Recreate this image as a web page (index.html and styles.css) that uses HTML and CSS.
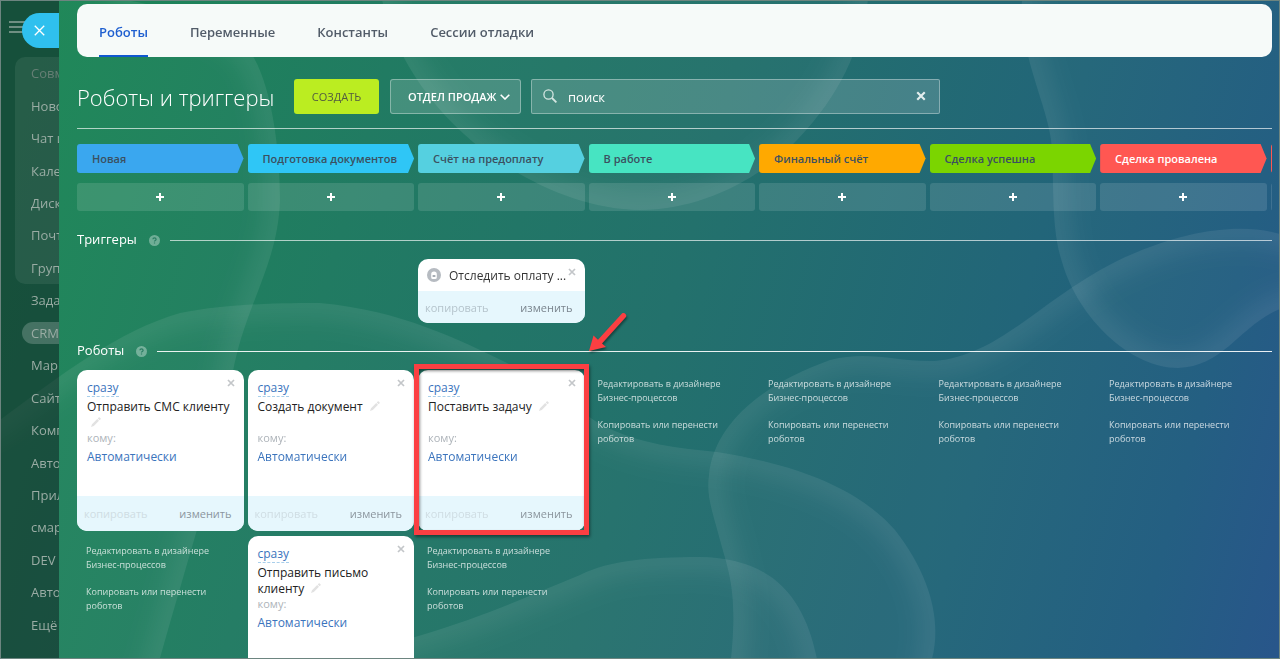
FILE: index.html
```html
<!DOCTYPE html>
<html lang="ru">
<head>
<meta charset="utf-8">
<title>Роботы и триггеры</title>
<link rel="stylesheet" href="styles.css">
</head>
<body>
<svg class="backdrop" viewBox="0 0 1280 659" preserveAspectRatio="none" aria-hidden="true">
  <defs>
    <linearGradient id="base" gradientUnits="userSpaceOnUse" x1="0" y1="200" x2="1300" y2="560">
      <stop offset="0" stop-color="#1c8656"/>
      <stop offset="0.25" stop-color="#217b62"/>
      <stop offset="0.5" stop-color="#23716c"/>
      <stop offset="0.75" stop-color="#226579"/>
      <stop offset="0.9" stop-color="#205c80"/>
      <stop offset="1" stop-color="#245388"/>
    </linearGradient>
    <filter id="soft" x="-20%" y="-20%" width="140%" height="140%"><feGaussianBlur stdDeviation="12"/></filter>
    <path id="w1" d="M-200 -200H100L125 0C190 10 240 35 254 58C272 90 280 150 280 200C278 270 240 310 230 390C220 480 150 659 100 900H-200Z"/>
    <path id="w2" d="M370 -200L382 0C395 60 440 120 490 155C540 190 590 209 640 210C700 210 760 180 798 139C840 95 860 50 868 0V-200Z"/>
    <path id="w3" d="M1022 -200V0C1018 50 1047 105 1051 140C1055 180 1050 225 1062 262C1078 318 1130 368 1178 368C1225 366 1240 325 1280 309L1480 250V-200Z"/>
    <path id="w4" d="M720 900L731 659C738 590 728 570 720 540C712 510 706 495 709 475C714 425 760 385 830 360C870 350 895 362 935 361C1000 355 1040 300 1115 262C1180 230 1240 222 1280 234L1480 280V900Z"/>
    <path id="w5" d="M-200 520L0 420C60 375 120 330 180 313C230 303 290 303 320 303C400 310 460 340 505 362C545 382 570 405 600 424C640 445 680 448 717 452C800 465 860 490 895 530C930 575 942 620 932 659L900 900H-200Z"/>
    <path id="w6" d="M200 690L415 637C490 615 530 595 580 575C610 560 650 557 700 557C775 558 805 600 817 659V900H200Z"/>
    <clipPath id="c1"><use href="#w1"/></clipPath>
    <clipPath id="c2"><use href="#w2"/></clipPath>
    <clipPath id="c3"><use href="#w3"/></clipPath>
    <clipPath id="c4"><use href="#w4"/></clipPath>
    <clipPath id="c5"><use href="#w5"/></clipPath>
    <clipPath id="c6"><use href="#w6"/></clipPath>
  </defs>
  <rect width="1280" height="659" fill="url(#base)"/>
  <g fill="#fff" fill-opacity="0.02">
    <use href="#w1"/><use href="#w2"/><use href="#w3"/><use href="#w4"/><use href="#w5"/><use href="#w6"/>
  </g>
  <g fill="none" stroke="#fff" stroke-width="28" stroke-opacity="0.08">
    <g clip-path="url(#c1)"><use href="#w1" filter="url(#soft)"/></g>
    <g clip-path="url(#c2)"><use href="#w2" filter="url(#soft)"/></g>
    <g clip-path="url(#c3)"><use href="#w3" filter="url(#soft)"/></g>
    <g clip-path="url(#c4)"><use href="#w4" filter="url(#soft)"/></g>
    <g clip-path="url(#c5)"><use href="#w5" filter="url(#soft)"/></g>
    <g clip-path="url(#c6)"><use href="#w6" filter="url(#soft)"/></g>
  </g>
</svg>
<svg class="sprite" aria-hidden="true">
  <symbol id="i-close" viewBox="0 0 8 8"><path d="M1 1l6 6M7 1L1 7" stroke="currentColor" stroke-width="1.7" fill="none"/></symbol>
  <symbol id="i-plus" viewBox="0 0 8 8"><path d="M4 0v8M0 4h8" stroke="currentColor" stroke-width="2" fill="none"/></symbol>
  <symbol id="i-pencil" viewBox="0 0 10 10"><path d="M0 10L1 7.2 6.2 2 8 3.8 2.8 9ZM6.8 1.4L7.9.3Q8.3 0 8.7.4L9.7 1.4Q10 1.8 9.6 2.2L8.6 3.2Z" fill="currentColor"/></symbol>
  <symbol id="i-help" viewBox="0 0 11 11"><circle cx="5.5" cy="5.5" r="5.5" fill="#fff" fill-opacity="0.35"/><path d="M3.9 4.3Q4 2.9 5.5 2.9T7.1 4.2Q7.1 5 6.2 5.5 5.5 5.9 5.5 6.6M5.5 7.4v1.2" stroke="#2a7b62" stroke-width="1.2" fill="none"/></symbol>
</svg>

<div class="app">
  <aside class="side">
    <button class="burger" type="button" aria-label="Меню"><span></span><span></span><span></span></button>
    <button class="slider-close" type="button" aria-label="Закрыть"><svg viewBox="0 0 10 10"><path d="M.7.7l8.6 8.6M9.3.7L.7 9.3" stroke="#fff" stroke-width="1.2"/></svg></button>
    <nav class="menu">
      <ul class="menu-group">
        <li><a class="faded" href="#">Совм</a></li>
        <li><a href="#">Ново</a></li>
        <li><a href="#">Чат и</a></li>
        <li><a href="#">Кале</a></li>
        <li><a href="#">Диск</a></li>
        <li><a href="#">Почт</a></li>
        <li><a href="#">Груп</a></li>
      </ul>
      <ul class="menu-rest">
        <li><a href="#">Зада</a></li>
        <li class="current"><a href="#">CRM</a></li>
        <li><a href="#">Мар</a></li>
        <li><a href="#">Сайт</a></li>
        <li><a href="#">Комп</a></li>
        <li><a href="#">Авто</a></li>
        <li><a href="#">Прил</a></li>
        <li><a href="#">смар</a></li>
        <li><a href="#">DEV</a></li>
        <li><a href="#">Авто</a></li>
        <li><a href="#">Ещё</a></li>
      </ul>
    </nav>
  </aside>

  <main class="panel">
    <nav class="tabs">
      <a class="active" href="#">Роботы</a>
      <a href="#">Переменные</a>
      <a href="#">Константы</a>
      <a href="#">Сессии отладки</a>
    </nav>

    <header class="toolbar">
      <h1>Роботы и триггеры</h1>
      <button class="create" type="button">СОЗДАТЬ</button>
      <div class="pick">
        <select aria-label="Воронка"><option>ОТДЕЛ ПРОДАЖ</option></select>
        <svg viewBox="0 0 10 6"><path d="M.7.7L5 5 9.3.7" fill="none" stroke="#fff" stroke-width="1.6"/></svg>
      </div>
      <div class="search">
        <svg class="lens" viewBox="0 0 14 14"><circle cx="5.5" cy="5.5" r="4.6" fill="none" stroke="#d5e6e2" stroke-width="1.3"/><path d="M9 9l4.4 4.4" stroke="#d5e6e2" stroke-width="1.8"/></svg>
        <input type="text" aria-label="Поиск" value="поиск">
        <button type="button" aria-label="Очистить"><svg><use href="#i-close"/></svg></button>
      </div>
    </header>

    <div class="board stages">
      <div class="stage blue">Новая</div>
      <div class="stage sky">Подготовка документов</div>
      <div class="stage aqua">Счёт на предоплату</div>
      <div class="stage mint">В работе</div>
      <div class="stage orange">Финальный счёт</div>
      <div class="stage green">Сделка успешна</div>
      <div class="stage red">Сделка провалена</div>
      <div class="stage red"></div>
    </div>
    <div class="board adds">
      <button type="button" aria-label="Добавить"><svg><use href="#i-plus"/></svg></button>
      <button type="button" aria-label="Добавить"><svg><use href="#i-plus"/></svg></button>
      <button type="button" aria-label="Добавить"><svg><use href="#i-plus"/></svg></button>
      <button type="button" aria-label="Добавить"><svg><use href="#i-plus"/></svg></button>
      <button type="button" aria-label="Добавить"><svg><use href="#i-plus"/></svg></button>
      <button type="button" aria-label="Добавить"><svg><use href="#i-plus"/></svg></button>
      <button type="button" aria-label="Добавить"><svg><use href="#i-plus"/></svg></button>
      <button type="button" aria-label="Добавить"></button>
    </div>

    <div class="section">
      <h2>Триггеры</h2>
      <svg><use href="#i-help"/></svg>
    </div>
    <div class="board triggers">
      <div class="column"></div>
      <div class="column"></div>
      <div class="column">
        <article class="card">
          <div class="trigger-head">
            <svg class="badge" viewBox="0 0 14 14"><circle cx="7" cy="7" r="7" fill="#b6bbc1"/><path d="M4.200 6.200a2.800 2.800 0 0 1 5.600 0v3.200q0 1.600-1.600 1.600H5.800q-1.600 0-1.600-1.600Z" fill="#fff"/><rect x="5.600" y="7" width="2.800" height="2" fill="#a6adb4"/></svg>
            <span>Отследить оплату ...</span>
            <button class="x" type="button" aria-label="Удалить"><svg><use href="#i-close"/></svg></button>
          </div>
          <footer class="trigger-foot"><button class="copy" type="button">копировать</button><button type="button">изменить</button></footer>
        </article>
      </div>
    </div>

    <div class="section strong">
      <h2>Роботы</h2>
      <svg><use href="#i-help"/></svg>
    </div>
    <div class="board robots">
      <div class="column">
        <article class="card">
          <div class="robot">
            <button class="x" type="button" aria-label="Удалить"><svg><use href="#i-close"/></svg></button>
            <a class="when" href="#">сразу</a>
            <h3>Отправить СМС клиенту <svg><use href="#i-pencil"/></svg></h3>
            <p>кому:</p>
            <a href="#">Автоматически</a>
          </div>
          <footer><button class="copy" type="button">копировать</button><button type="button">изменить</button></footer>
        </article>
        <div class="links low"><a href="#">Редактировать в дизайнере Бизнес-процессов</a><a href="#">Копировать или перенести роботов</a></div>
      </div>
      <div class="column">
        <article class="card">
          <div class="robot">
            <button class="x" type="button" aria-label="Удалить"><svg><use href="#i-close"/></svg></button>
            <a class="when" href="#">сразу</a>
            <h3>Создать документ <svg><use href="#i-pencil"/></svg></h3>
            <p>кому:</p>
            <a href="#">Автоматически</a>
          </div>
          <footer><button class="copy" type="button">копировать</button><button type="button">изменить</button></footer>
        </article>
        <article class="card">
          <div class="robot">
            <button class="x" type="button" aria-label="Удалить"><svg><use href="#i-close"/></svg></button>
            <a class="when" href="#">сразу</a>
            <h3>Отправить письмо клиенту <svg><use href="#i-pencil"/></svg></h3>
            <p>кому:</p>
            <a href="#">Автоматически</a>
          </div>
          <footer><button class="copy" type="button">копировать</button><button type="button">изменить</button></footer>
        </article>
      </div>
      <div class="column">
        <article class="card marked">
          <div class="robot">
            <button class="x" type="button" aria-label="Удалить"><svg><use href="#i-close"/></svg></button>
            <a class="when" href="#">сразу</a>
            <h3>Поставить задачу <svg><use href="#i-pencil"/></svg></h3>
            <p>кому:</p>
            <a href="#">Автоматически</a>
          </div>
          <footer><button class="copy" type="button">копировать</button><button type="button">изменить</button></footer>
          <svg class="arrow" viewBox="0 0 40 44" aria-hidden="true"><path d="M0 40L4.500 24.500 9 28.700 32.500 3A2.600 2.600 0 0 1 36.500 6.500L13 32.500 17 36Z" fill="#fb3f42"/></svg>
        </article>
        <div class="links low"><a href="#">Редактировать в дизайнере Бизнес-процессов</a><a href="#">Копировать или перенести роботов</a></div>
      </div>
      <div class="column"><div class="links"><a href="#">Редактировать в дизайнере Бизнес-процессов</a><a href="#">Копировать или перенести роботов</a></div></div>
      <div class="column"><div class="links"><a href="#">Редактировать в дизайнере Бизнес-процессов</a><a href="#">Копировать или перенести роботов</a></div></div>
      <div class="column"><div class="links"><a href="#">Редактировать в дизайнере Бизнес-процессов</a><a href="#">Копировать или перенести роботов</a></div></div>
      <div class="column"><div class="links"><a href="#">Редактировать в дизайнере Бизнес-процессов</a><a href="#">Копировать или перенести роботов</a></div></div>
    </div>
  </main>
</div>
<div class="frame"></div>
</body>
</html>
```
FILE: styles.css
```css
* { box-sizing: border-box; }
body {
  margin: 0;
  height: 100vh;
  overflow: hidden;
  font-family: "Open Sans", "Noto Sans", sans-serif;
  font-size: 13px;
  background: #23736c;
}
a { text-decoration: none; color: inherit; }
ul, h1, h2, h3, p { margin: 0; padding: 0; list-style: none; font-weight: 400; }
button, input, select {
  font: inherit;
  color: inherit;
  border: 0;
  padding: 0;
  margin: 0;
  background: none;
}
.backdrop { position: fixed; inset: 0; width: 100%; height: 100%; }
.sprite { display: none; }
.frame { position: fixed; inset: 0; border: 1px solid #6d8580; pointer-events: none; }
.app { position: relative; display: flex; height: 100vh; overflow: hidden; }

/* main menu, dimmed under the slider */
.side {
  position: relative;
  flex: 0 0 59px;
  padding: 57px 0 18px 15px;
  overflow: hidden;
  background: rgba(12, 14, 22, 0.45);
}
.burger { position: absolute; left: 9px; top: 21px; display: grid; gap: 3px; width: 17px; }
.burger span { height: 2px; background: #6f8f82; }
.slider-close {
  position: absolute;
  left: 22px;
  top: 13px;
  width: 37px;
  height: 35px;
  padding-left: 12px;
  border-radius: 18px 0 0 18px;
  background: #2fc0ee;
}
.slider-close svg { display: block; width: 11px; height: 11px; }
.menu { display: flex; flex-direction: column; height: 100%; color: #9aaca4; white-space: nowrap; }
.menu-group, .menu-rest { display: flex; flex-direction: column; }
.menu-group { flex: 7; border-radius: 10px 0 0 10px; background: rgba(255, 255, 255, 0.07); }
.menu-rest { flex: 11; }
.menu li { flex: 1; display: flex; align-items: center; padding-left: 16px; }
.menu .faded { color: #667f75; }
.menu .current a {
  margin-left: -9px;
  padding: 2px 0 2px 9px;
  width: 60px;
  border-radius: 11px 0 0 11px;
  background: rgba(255, 255, 255, 0.2);
}

.panel { flex: 1; min-width: 0; padding: 4px 8px 0 18px; color: #fff; }
.tabs {
  display: flex;
  gap: 42px;
  height: 53px;
  padding: 0 22px;
  border-radius: 10px;
  background: #f6faf9;
  color: #525c69;
  font-weight: 600;
}
.tabs a { display: flex; align-items: center; padding-top: 4px; border-bottom: 2px solid transparent; }
.tabs .active { color: #1f5fd0; border-color: #1058d0; }

.toolbar {
  display: flex;
  align-items: center;
  height: 72px;
  padding-top: 7px;
  border-bottom: 1px solid rgba(255, 255, 255, 0.65);
}
.toolbar h1 { width: 217px; padding-top: 2px; font-size: 22px; font-weight: 300; white-space: nowrap; }
.create {
  width: 85px;
  height: 35px;
  border-radius: 3px;
  background: #bbed21;
  color: #535c40;
  font-size: 11px;
}
.pick {
  position: relative;
  margin: 0 10px 0 11px;
  border: 1px solid rgba(255, 255, 255, 0.35);
  border-radius: 3px;
  background: rgba(255, 255, 255, 0.16);
}
.pick select {
  appearance: none;
  display: block;
  width: 129px;
  height: 33px;
  padding-left: 17px;
  font-size: 11px;
  font-weight: 600;
}
.pick svg { position: absolute; right: 10px; top: 14px; width: 10px; height: 6px; }
.search {
  display: flex;
  align-items: center;
  flex: 0 1 409px;
  height: 35px;
  padding: 0 13px 0 11px;
  border: 1px solid rgba(255, 255, 255, 0.35);
  border-radius: 2px;
  background: rgba(255, 255, 255, 0.16);
}
.lens { width: 14px; height: 14px; margin-right: 11px; }
.search input { flex: 1; min-width: 0; padding-top: 2px; outline: 0; }
.search button { display: flex; color: #e3eeee; }
.search button svg { width: 10px; height: 10px; }

.board {
  display: grid;
  grid-auto-flow: column;
  grid-auto-columns: calc(14.27% - 4px);
  column-gap: 4px;
}
.stages, .adds { overflow: hidden; }
.stages { margin-top: 15px; }
.stage {
  height: 29px;
  padding-left: 15px;
  border-radius: 3px;
  line-height: 29px;
  font-size: 11px;
  font-weight: 600;
  color: #3b5060;
  white-space: nowrap;
  clip-path: polygon(0 0, calc(100% - 6px) 0, 100% 50%, calc(100% - 6px) 100%, 0 100%);
}
.blue { background: #3aa7ef; }
.sky { background: #2fc6f6; }
.aqua { background: #55d0e0; }
.mint { background: #47e4c2; }
.orange { background: #ffa900; }
.green { background: #7bd500; }
.red { background: #ff5752; color: #fff; }
.adds { margin-top: 10px; }
.adds button {
  display: grid;
  place-items: center;
  height: 28px;
  border-radius: 3px;
  background: rgba(255, 255, 255, 0.12);
}
.adds svg { width: 8px; height: 8px; }

.section { display: flex; align-items: center; height: 20px; margin-top: 19px; }
.section h2 { padding-bottom: 2px; font-size: 13px; }
.section svg { width: 11px; height: 11px; margin: 0 10px 0 12px; }
.section::after { content: ""; flex: 1; height: 1px; background: rgba(255, 255, 255, 0.65); }
.section.strong { margin-top: 18px; }
.section.strong::after { background: rgba(255, 255, 255, 0.9); }

.column { display: flex; flex-direction: column; gap: 5px; min-width: 0; }
.triggers { min-height: 64px; margin-top: 9px; }
.robots { margin-top: 9px; }
.card { position: relative; border-radius: 10px; background: #fff; color: #333; }
.card footer {
  display: flex;
  justify-content: space-between;
  align-items: center;
  height: 35px;
  padding: 0 12px 0 7px;
  border-radius: 0 0 10px 10px;
  background: #e6f7fd;
  color: #8b959d;
  font-size: 11px;
}
.card footer .copy { color: #cfdde3; }
.card .trigger-foot { height: 32px; color: #7a858e; }
.card .trigger-foot .copy { color: #b5c4cc; }
.card .x { position: absolute; right: 9px; top: 9px; display: flex; color: #c3c6c9; }
.card .x svg { width: 8px; height: 8px; }
.trigger-head { display: flex; align-items: center; height: 32px; padding-left: 9px; white-space: nowrap; font-size: 12px; }
.badge { width: 14px; height: 14px; margin-right: 8px; }
.robot { height: 126px; padding: 10px 4px 0 10px; line-height: 16px; font-size: 12px; color: #3b74bd; }
.robot a { display: table; }
.robot .when { border-bottom: 1px dashed #a9cfeb; }
.robot h3 { height: 31px; font-size: 12px; color: #222; margin-top: 2px; }
.robot h3 svg { width: 10px; height: 10px; margin-left: 4px; color: #e2e2e2; }
.robot p { font-size: 11px; color: #adb3b9; margin-bottom: 3px; }

.links { display: grid; gap: 13px; padding: 7px 8px 0 9px; font-size: 9px; line-height: 14px; color: rgba(255, 255, 255, 0.75); }
.links a { max-width: 135px; }
.links.low { padding-top: 8px; }

/* highlight frame with its pointer */
.marked::after {
  content: "";
  position: absolute;
  inset: -6px -4px -4px -4px;
  border: 5px solid #fb3f42;
  box-shadow: 1px 2px 3px rgba(0, 0, 0, 0.45), inset 1px 2px 3px rgba(0, 0, 0, 0.45);
  pointer-events: none;
}
.arrow {
  position: absolute;
  left: 100%;
  top: -59px;
  width: 40px;
  height: 44px;
  margin-left: 4px;
  filter: drop-shadow(1px 2px 1px rgba(0, 0, 0, 0.4));
}
```
